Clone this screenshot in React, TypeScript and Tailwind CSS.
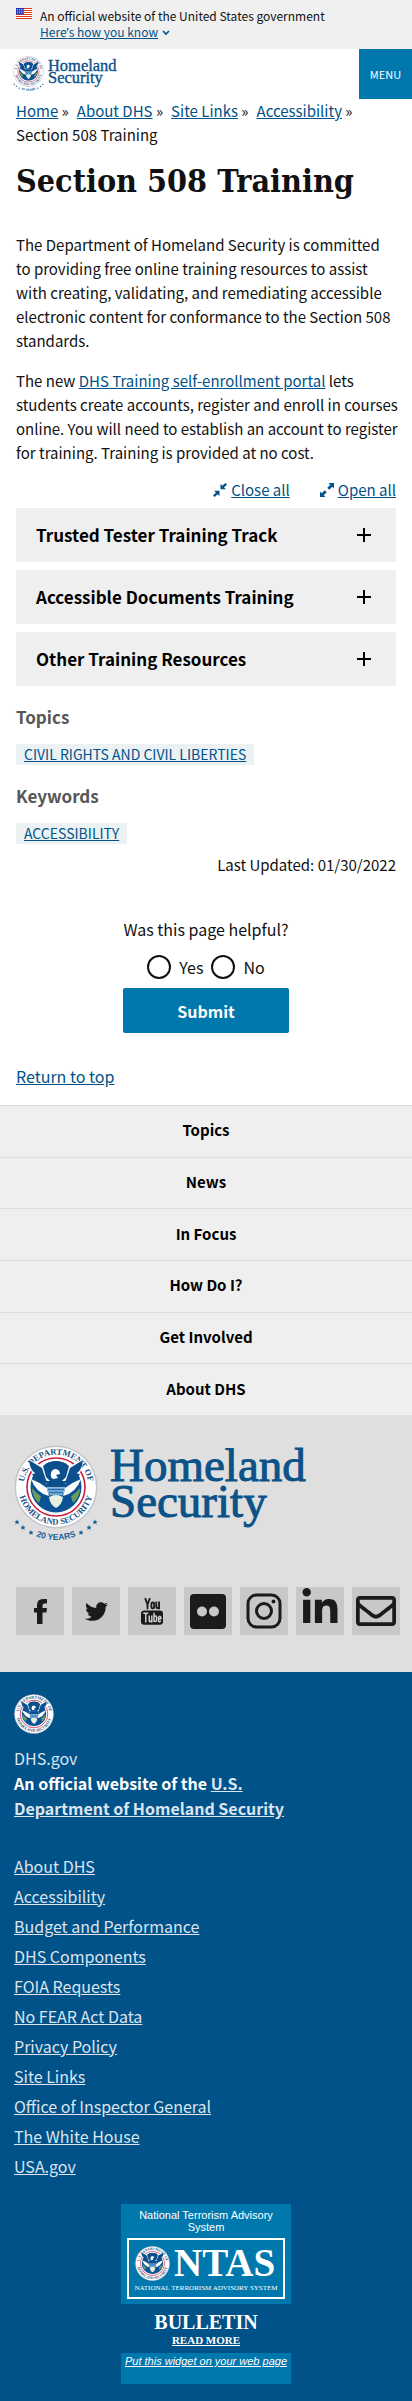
import React from "react";
import { FaTwitter, FaLinkedinIn, FaRegEnvelope } from "react-icons/fa";

const sans = "font-['Noto_Sans_CJK_SC','Noto_Sans',sans-serif]";

function Seal({ years, size }: { years?: boolean; size: string }) {
  return (
    <svg viewBox={years ? "0 0 84 98" : "0 0 84 84"} className={size} role="img" aria-label="U.S. Department of Homeland Security seal">
      <defs>
        <path id="arcTop" d="M9.500 42 A32.500 32.500 0 0 1 74.500 42" />
        <path id="arcBottom" d="M4.500 42 A37.500 37.500 0 0 0 79.500 42" />
        <path id="arcYears" d="M-11 42 A53 53 0 0 0 95 42" />
      </defs>
      <circle cx="42" cy="42" r="41.5" fill="#c4c6cb" />
      <circle cx="42" cy="42" r="40" fill="#fff" />
      <g fill="#1b5288" fontFamily="Liberation Serif, serif" fontSize="8.6" fontWeight="700">
        <text textAnchor="middle"><textPath href="#arcTop" startOffset="50%">U.S. DEPARTMENT OF</textPath></text>
        <text textAnchor="middle"><textPath href="#arcBottom" startOffset="50%">HOMELAND SECURITY</textPath></text>
      </g>
      <circle cx="42" cy="42" r="29" fill="none" stroke="#c8203c" strokeWidth="1.6" />
      <circle cx="42" cy="42" r="25.5" fill="#0b5394" />
      <path d="M18 43q5 6 9 8l-2 7q-7-6-7-15zM66 43q-5 6-9 8l2 7q7-6 7-15z" fill="#6f9a5a" />
      <path d="M15 14l11 6 5-2 3 12 8 3 8-3 3-12 5 2 11-6q0 15-11 22l-7 3H33l-7-3q-11-7-11-22z" fill="#fff" />
      <path d="M15 15l13 8 4 12 2 3-4 1q-9-3-12-10 3 0 3-1-5-3-6-13zM69 15l-13 8-4 12-2 3 4 1q9-3 12-10-3 0-3-1 5-3 6-13z" fill="#0b4f8c" />
      <path d="M29 21q6-5 13-5t13 5l-3 11-4 4H36l-4-4z" fill="#0b4f8c" />
      <path d="M37 28q1-4 5-4 4 1 4 5l-4 1 2 3-5 1q-3-2-2-6z" fill="#fff" />
      <path d="M17 34q8 3 16 9l2 8q-13-3-18-17zM67 34q-8 3-16 9l-2 8q13-3 18-17z" fill="#fff" />
      <path d="M33 37h18v9q-2 5-9 7-7-2-9-7z" fill="#8fbbdb" />
      <path d="M33 36h18v6H33z" fill="#0b4f8c" />
      <path d="M34 44.500h16M35 47.500h14M37 50.500h10" stroke="#1f6fb0" strokeWidth="1.5" />
      <path d="M35 52q7-4 14 0-1 8-7 11-6-3-7-11z" fill="#e8f1df" />
      {years && (
        <g fill="#1b6095">
          <text textAnchor="middle" fontFamily="Liberation Sans, sans-serif" fontSize="8.5" fontWeight="700">
            <textPath href="#arcYears" startOffset="50%">20 YEARS</textPath>
          </text>
          {[[3, 77], [9, 82.5], [17, 87.5], [67, 87.5], [75, 82.5], [81, 77]].map(([x, y]) => (
            <path key={x} transform={`translate(${x} ${y})`} d="M0-2.600L.8-.8 2.600-.7 1.200.5 1.700 2.400 0 1.300-1.700 2.400-1.200.5-2.600-.7-.8-.8z" />
          ))}
        </g>
      )}
    </svg>
  );
}

function Wordmark({ size }: { size: string }) {
  return (
    <svg viewBox="0 0 200 84" className={size} role="img" aria-label="Homeland Security">
      <g fill="#0b5288" stroke="#0b5288" strokeWidth="1" fontFamily="Liberation Serif, serif" fontSize="47">
        <text x="0" y="36">Homeland</text>
        <text x="0" y="72">Security</text>
      </g>
    </svg>
  );
}

function Flag() {
  return (
    <svg viewBox="0 0 16 11" className="h-[11px] w-4 shrink-0" aria-hidden="true">
      <rect width="16" height="11" fill="#fff" />
      <path d="M0 .5h16M0 2.500h16M0 4.500h16M0 6.500h16M0 8.500h16M0 10.500h16" stroke="#db3e1f" />
      <rect width="8" height="6.4" fill="#1e33b1" />
      <path d="M1 1.500h6.500M1 3.200h6.500M1 4.900h6.500" stroke="#fff" strokeWidth=".8" strokeDasharray=".9 1" />
    </svg>
  );
}

const link = "text-[#005288] underline";
const crumbs = ["Home", "About DHS", "Site Links", "Accessibility"];
const accordions = ["Trusted Tester Training Track", "Accessible Documents Training", "Other Training Resources"];
const menu = ["Topics", "News", "In Focus", "How Do I?", "Get Involved", "About DHS"];
const footerLinks = [
  "About DHS", "Accessibility", "Budget and Performance", "DHS Components", "FOIA Requests", "No FEAR Act Data",
  "Privacy Policy", "Site Links", "Office of Inspector General", "The White House", "USA.gov",
];

const socials = [
  {
    name: "Facebook",
    icon: (
      <svg viewBox="0 0 13 25" className="h-[25px] w-[13px]" fill="currentColor" aria-hidden="true">
        <path d="M3 25V13.500H0V9h3V6Q3 0 9 0h4v4.500h-2.500Q8.500 4.500 8.500 6.500V9H13l-.6 4.500H8.500V25z" />
      </svg>
    ),
  },
  { name: "Twitter", icon: <FaTwitter className="size-[23px]" /> },
  {
    name: "YouTube",
    icon: (
      <svg viewBox="0 0 24 30" className="h-7 w-[22px]" fill="none" stroke="currentColor" strokeWidth="2" aria-hidden="true">
        <path d="M4.500 1l2.600 7 2.600-7M7.100 7.500V13M11.300 7a1.500 1.500 0 0 1 3 0v3.700a1.500 1.500 0 0 1-3 0zM16.700 4.500v6.500q.5 2 3-.6M19.700 4.500V13" />
        <rect x="0" y="14.500" width="24" height="15.500" rx="3.500" fill="currentColor" stroke="none" />
        <path stroke="#d2d2d2" strokeWidth="1.600" d="M2.500 17.500h5.500M5.200 17.500V27.500M9 20v6q.5 1.500 2.800-.5M11.800 20v7.500M14.200 17v10M14.200 21q2.800-1.500 2.800 1v3q0 2.200-2.800 1M21.700 25.500q-2.500 3-2.500-.5v-3q1.300-2.500 2.500 0v1.500h-2.500" />
      </svg>
    ),
  },
  {
    name: "Flickr",
    icon: (
      <svg viewBox="0 0 36 35" className="h-[35px] w-9" aria-hidden="true">
        <rect width="36" height="35" rx="4" fill="currentColor" />
        <circle cx="12" cy="17.500" r="5" fill="#c8c8c8" />
        <circle cx="24" cy="17.500" r="5" fill="#c8c8c8" />
      </svg>
    ),
  },
  {
    name: "Instagram",
    icon: (
      <svg viewBox="0 0 36 36" className="size-9" fill="none" stroke="currentColor" strokeWidth="3" aria-hidden="true">
        <rect x="2" y="2" width="32" height="32" rx="8.500" />
        <circle cx="18" cy="18" r="7.500" />
        <circle cx="27.500" cy="8.500" r="2" fill="currentColor" stroke="none" />
      </svg>
    ),
  },
  { name: "LinkedIn", icon: <FaLinkedinIn className="mb-1.5 size-10" /> },
  { name: "Email", icon: <FaRegEnvelope className="size-10" /> },
];

export default function App() {
  return (
    <div className={`${sans} bg-white text-[15px] leading-6 text-[#111]`}>
      <section className="flex gap-2 bg-[#f0f0f0] px-4 py-2 text-[12px] leading-4" aria-label="Official government website">
        <Flag />
        <div className="h-[33px]">
          <p className="whitespace-nowrap">An official website of the United States government</p>
          <button type="button" className="flex items-center gap-1 text-[#005288]">
            <span className="underline">Here<span className="font-['Noto_Sans',sans-serif]">’</span>s how you know</span>
            <svg viewBox="0 0 8 6" className="h-[6px] w-2" fill="none" stroke="currentColor" strokeWidth="1.600"><path d="M1 1l3 3 3-3" /></svg>
          </button>
        </div>
      </section>

      <header className="flex h-[50px] justify-between">
        <a href="#home" className="flex gap-1 pt-[7px] pl-[13px]">
          <Seal years size="h-[36px] w-[31px]" />
          <Wordmark size="mt-[2px] h-[30px] w-[70px]" />
        </a>
        <button type="button" className="w-[53px] bg-[#0078ae] text-[11px] text-white">MENU</button>
      </header>

      <main className="px-4">
        <nav aria-label="Breadcrumb" className="flex flex-wrap">
          {crumbs.map((c) => (
            <span key={c} className="mr-2"><a href="#crumb" className={link}>{c}</a> »</span>
          ))}
          <span>Section 508 Training</span>
        </nav>
        <h1 className="mt-3 -mr-2 font-['DejaVu_Serif_Condensed','DejaVu_Serif',serif] text-[32px] leading-[44px] font-bold">Section 508 Training</h1>
        <p className="mt-[30px]">
          The Department of Homeland Security is committed to providing free online training resources to assist with creating,
          validating, and remediating accessible electronic content for conformance to the Section 508 standards.
        </p>
        <p className="mt-4 -mr-2">
          The new <a href="#portal" className={link}>DHS Training self-enrollment portal</a> lets students create accounts, register
          and enroll in courses online. You will need to establish an account to register for training. Training is provided at no cost.
        </p>
        <div className="mt-[13px] flex justify-end gap-[30px]">
          <button type="button" className="flex items-center gap-1 text-[#005288]">
            <svg viewBox="0 0 14 14" className="size-[14px]" fill="currentColor"><path d="M0 12.500L3 9.500 1 7.700H6.500V13L4.700 11.200 1.700 14zM14 1.500L11 4.500 13 6.300H7.500V1L9.300 2.800 12.300 0z" /></svg>
            <span className="underline">Close all</span>
          </button>
          <button type="button" className="flex items-center gap-1 text-[#005288]">
            <svg viewBox="0 0 14 14" className="size-[14px]" fill="currentColor"><path d="M14 0v5.500L12.200 3.700 9.200 6.700 7.300 4.800 10.300 1.800 8.500 0zM0 14V8.500L1.800 10.300 4.800 7.300 6.700 9.200 3.700 12.200 5.500 14z" /></svg>
            <span className="underline">Open all</span>
          </button>
        </div>
        <div className="mt-[6px] flex flex-col gap-2">
          {accordions.map((a) => (
            <h2 key={a}>
              <button type="button" aria-expanded="false" className="flex h-[54px] w-full items-center justify-between bg-[#efefef] pr-6 pl-5 text-left text-[17px] font-bold text-black">
                {a}
                <svg viewBox="0 0 16 16" className="size-4" stroke="currentColor" strokeWidth="2"><path d="M8 1v14M1 8h14" /></svg>
              </button>
            </h2>
          ))}
        </div>
        <h3 className="mt-[19px] text-[17px] font-bold text-[#565656]">Topics</h3>
        <div className="mt-[15px] flex"><a href="#civil" className="bg-[#ecf2f3] px-2 text-[14px] leading-[21px] text-[#005288] underline">CIVIL RIGHTS AND CIVIL LIBERTIES</a></div>
        <h3 className="mt-[19px] text-[17px] font-bold text-[#565656]">Keywords</h3>
        <div className="mt-[15px] flex"><a href="#access" className="bg-[#ecf2f3] px-2 text-[14px] leading-[21px] text-[#005288] underline">ACCESSIBILITY</a></div>
        <p className="mt-[9px] text-right">Last Updated: 01/30/2022</p>

        <form className="mt-10 text-center text-[16px]" onSubmit={(e) => e.preventDefault()}>
          <fieldset>
            <legend className="w-full text-center">Was this page helpful?</legend>
            <div className="mt-[14px] flex justify-center gap-2">
              {["Yes", "No"].map((v) => (
                <label key={v} className="flex items-center gap-2">
                  <input type="radio" name="helpful" value={v} className="size-6 appearance-none rounded-full border-2 border-[#111] bg-white" />
                  {v}
                </label>
              ))}
            </div>
          </fieldset>
          <button type="submit" className="mt-[9px] h-[45px] w-[166px] rounded-xs bg-[#0078ae] font-bold text-white">Submit</button>
        </form>
        <a href="#top" className={`${link} mt-[31px] inline-block text-[16px]`}>Return to top</a>
      </main>

      <nav aria-label="Footer" className="mt-4 grid min-h-[310px] auto-rows-fr text-center font-bold text-black">
        {menu.map((m) => (
          <a key={m} href="#menu" className="flex items-center justify-center border-t border-[#dcdee0] bg-[#efefef] pb-[2px]">{m}</a>
        ))}
      </nav>

      <section className="bg-[#dfdfdf] pt-[30px] pr-3 pb-[37px] pl-4 text-[#1b1b1b]" aria-label="Homeland Security">
        <a href="#dhs" className="-ml-[2px] flex gap-3">
          <Seal years size="h-[98px] w-[84px]" />
          <Wordmark size="h-[84px] w-[200px]" />
        </a>
        <div className="mt-11 flex gap-2">
          {socials.map((s) => (
            <a key={s.name} href="#social" aria-label={s.name} className="flex size-12 items-center justify-center bg-[#c8c8c8]">{s.icon}</a>
          ))}
        </div>
      </section>

      <footer className="bg-[#005288] px-[14px] pt-[22px] pb-[18px] text-[16px] text-[#dce4ef]">
        <Seal size="size-10" />
        <p className="mt-3 leading-[25px]">DHS.gov</p>
        <p className="max-w-[280px] leading-[25px] font-bold text-white">
          An official website of the <a href="#dept" className="text-[#dce4ef] underline">U.S. Department of Homeland Security</a>
        </p>
        <ul className="mt-[30px]">
          {footerLinks.map((f) => (
            <li key={f} className="leading-[30px]"><a href="#footer" className="underline">{f}</a></li>
          ))}
        </ul>
        <aside className="mx-auto mt-[23px] w-[170px] text-center text-white">
          <div className="h-[100px] bg-[#0078ae] px-[6px] pt-[5px] font-['Liberation_Sans',sans-serif] text-[11px] leading-3">
            <p className="px-1">National Terrorism Advisory System</p>
            <svg viewBox="0 0 158 61" className="mt-[5px] h-[61px] w-full" role="img" aria-label="NTAS">
              <rect x="1" y="1" width="156" height="59" fill="none" stroke="#fff" strokeWidth="2" />
              <svg x="8" y="8" width="35" height="35" viewBox="0 0 84 84"><Seal size="" /></svg>
              <g fill="#fff" fontFamily="Liberation Serif, serif">
                <text x="47" y="38" fontSize="39" fontWeight="700">NTAS</text>
                <text x="79" y="52" fontSize="7" textAnchor="middle">NATIONAL TERRORISM ADVISORY SYSTEM</text>
              </g>
            </svg>
          </div>
          <div className="flex h-[49px] flex-col items-center pt-[7px] font-['Liberation_Serif',serif] font-bold">
            <strong className="text-[20px] leading-[22px]">BULLETIN</strong>
            <a href="#more" className="text-[11px] leading-[14px] underline">READ MORE</a>
          </div>
          <div className="h-[31px] bg-[#0078ae] pt-[2px] font-['Liberation_Sans',sans-serif] text-[11px] leading-3">
            <a href="#widget" className="whitespace-nowrap italic underline">Put this widget on your web page</a>
          </div>
        </aside>
      </footer>
    </div>
  );
}
